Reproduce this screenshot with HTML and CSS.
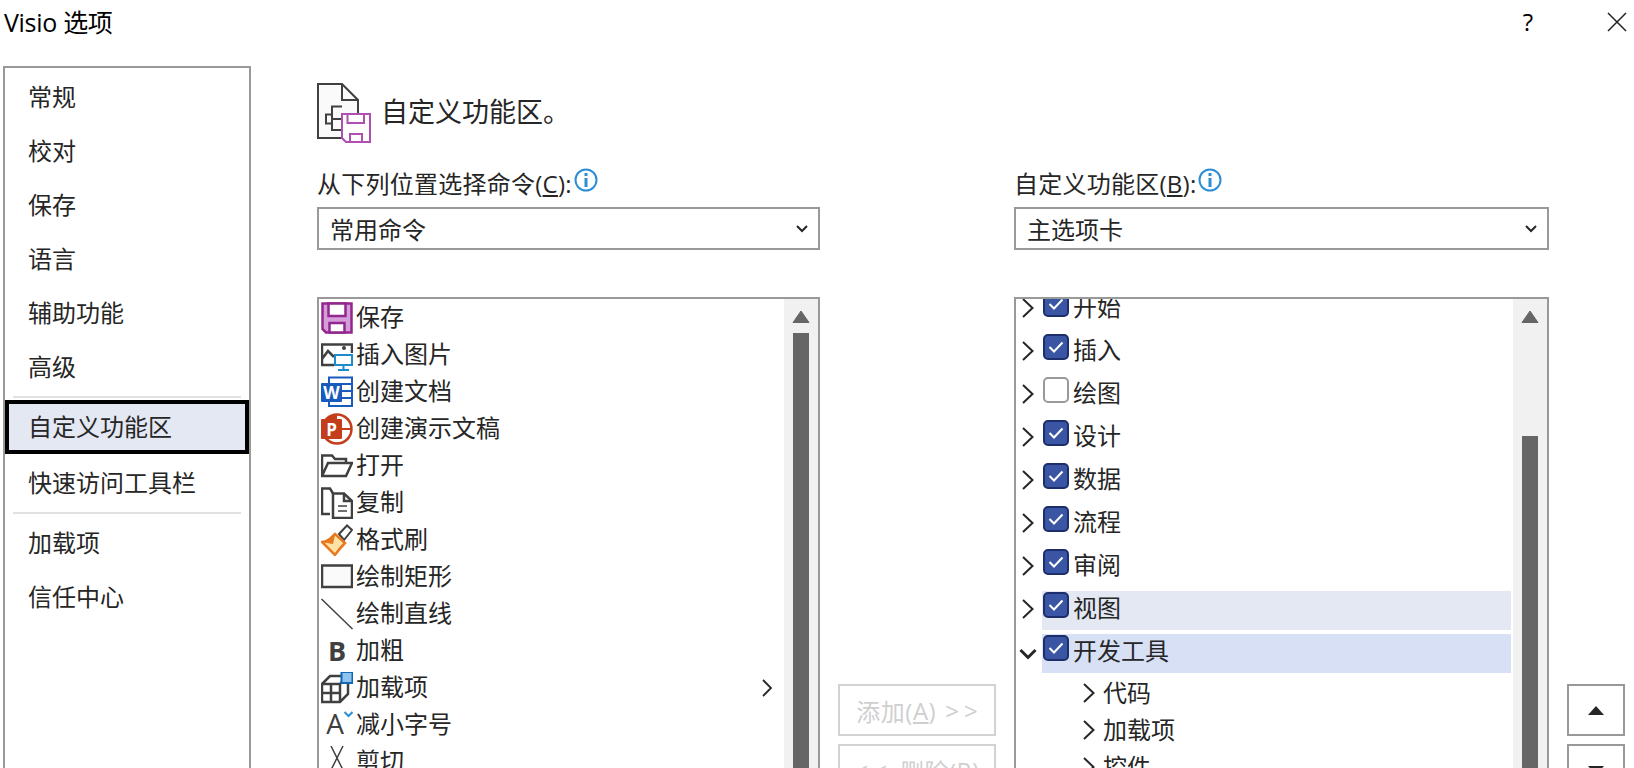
FILE: index.html
```html
<!DOCTYPE html>
<html lang="zh-CN">
<head>
<meta charset="utf-8">
<title>Visio 选项</title>
<link rel="stylesheet" href="styles.css">
</head>
<body>
<div class="dialog">
  <header class="titlebar">
    <div class="title">Visio 选项</div>
    <div class="help">?</div>
    <svg class="close" viewBox="0 0 20 20"><path d="M1 1L19 19M19 1L1 19"/></svg>
  </header>
  <div class="main">
    <nav class="nav">
      <div class="nav-item">常规</div>
      <div class="nav-item">校对</div>
      <div class="nav-item">保存</div>
      <div class="nav-item">语言</div>
      <div class="nav-item">辅助功能</div>
      <div class="nav-item">高级</div>
      <div class="nav-sep"></div>
      <div class="nav-item nav-selected">自定义功能区</div>
      <div class="nav-item nav-tall">快速访问工具栏</div>
      <div class="nav-sep"></div>
      <div class="nav-item">加载项</div>
      <div class="nav-item">信任中心</div>
    </nav>
    <section class="content">
      <div class="heading">
        <svg class="heading-icon" viewBox="0 0 56 62">
          <path class="dk2" fill="#fafafa" d="M1 56V2H25L41 18V56Z"/>
          <path class="dk2" fill="none" d="M25 2V18H41"/>
          <path class="dk2" fill="none" d="M9 32.500H15V41.500H9ZM15 32.500V24.500H25M15 37H25M15 41.500V48H25"/>
          <path fill="#fff" stroke="#ae4fb4" stroke-width="2" d="M25 32H53V60H29L25 56Z"/>
          <path fill="none" stroke="#ae4fb4" stroke-width="2" d="M30.500 32V41H47V32M33 60V52H45V60"/>
        </svg>
        <span>自定义功能区。</span>
      </div>
      <div class="columns">
        <div class="col col-left">
          <div class="label"><span>从下列位置选择命令(<u>C</u>):</span>
            <svg class="info" viewBox="0 0 24 24"><circle cx="12" cy="12" r="10.5"/><rect x="10.5" y="10" width="3" height="9"/><rect x="10.5" y="5" width="3" height="3"/></svg>
          </div>
          <div class="select"><span>常用命令</span>
            <svg class="sel-chev" viewBox="0 0 12 8"><path d="M1 1L6 6L11 1"/></svg>
          </div>
          <div class="list">
            <div class="rows">
              <div class="row"><svg class="ic" viewBox="0 0 32 32"><path fill="#d69ed9" stroke="#92278f" stroke-width="2.5" d="M1.5 1.5H30.5V30.5H5L1.5 27Z"/><path fill="#fff" stroke="#92278f" stroke-width="2.5" d="M7.5 1.5V14H24.5V1.5ZM8.5 30.5V21H23.5V30.5Z"/></svg><span>保存</span></div>
              <div class="row"><svg class="ic" viewBox="0 0 32 32"><path class="dk" fill="none" d="M13 26H1V5.500H31V14M1 20L7 12L13 18"/><circle cx="23" cy="9" r="2" fill="#404040"/><path fill="#fff" stroke="#1e8bcd" stroke-width="2" d="M14 16H31V26H14Z"/><path stroke="#1e8bcd" stroke-width="2" d="M22.500 26V31M17 31H28"/></svg><span>插入图片</span></div>
              <div class="row"><svg class="ic" viewBox="0 0 32 32"><path fill="#fff" stroke="#185abd" stroke-width="2" d="M8 1.500H31V30H8Z"/><path stroke="#185abd" stroke-width="2" d="M20 8H31M20 15H31M20 22H31"/><rect x="0" y="7" width="21" height="19" rx="1" fill="#185abd"/><text class="ic-w" x="10.500" y="22.500">W</text></svg><span>创建文档</span></div>
              <div class="row"><svg class="ic" viewBox="0 0 32 32"><circle cx="16" cy="16" r="14.500" fill="#fff" stroke="#c43e1c" stroke-width="2.500"/><path fill="#c43e1c" d="M16 1.500A14.500 14.500 0 0 0 4 24H16Z"/><path stroke="#c43e1c" stroke-width="2" d="M16 16H31"/><rect x="0" y="6" width="21" height="20" rx="1" fill="#c43e1c"/><text class="ic-p" x="10.500" y="22.500">P</text></svg><span>创建演示文稿</span></div>
              <div class="row"><svg class="ic" viewBox="0 0 32 32"><path class="dk" fill="none" d="M1 26V5.500H11L14 9H25V13M1 26H25L31 13H7L1 26Z"/></svg><span>打开</span></div>
              <div class="row"><svg class="ic" viewBox="0 0 32 32"><path class="dk" fill="none" d="M13 8L9 1.500H1V27H9"/><path class="dk" fill="#fff" d="M12 6.500H23L31 14V31H12Z"/><path class="dk" fill="none" d="M23 6.500V14H31"/><path stroke="#707070" stroke-width="2" d="M17 19H26M17 24H26"/></svg><span>复制</span></div>
              <div class="row"><svg class="ic" viewBox="0 0 32 32"><path fill="#fff" stroke="#404040" stroke-width="2" d="M18 10L26 1.500L31 6L23 16Z"/><path fill="#fbe3a8" stroke="#e8791e" stroke-width="2.500" d="M1 18C6 18 9 15 14 10L24 19C19 24 17 27 14 31Z"/><path fill="#e8791e" d="M3 18C6 18 9 15 14 11L12 20L6 19Z"/></svg><span>格式刷</span></div>
              <div class="row"><svg class="ic" viewBox="0 0 32 32"><rect class="dk" x="1" y="4.500" width="30" height="21.500" fill="#fafafa"/></svg><span>绘制矩形</span></div>
              <div class="row"><svg class="ic" viewBox="0 0 32 32"><path stroke="#404040" stroke-width="1.500" d="M0.500 1L31.500 31"/></svg><span>绘制直线</span></div>
              <div class="row"><span class="ic ic-b">B</span><span>加粗</span></div>
              <div class="row"><svg class="ic" viewBox="0 0 32 32"><path class="dk" fill="none" d="M1 12L9 4H27V22L19 30H1ZM1 12H19V30M19 12L27 4M10 12V30M1 21H19"/><rect x="20.500" y="0" width="11" height="11" fill="#8ec3ee" stroke="#1168b8" stroke-width="2"/></svg><span>加载项</span><svg class="more" viewBox="0 0 12 18"><path d="M2 1L10 9L2 17"/></svg></div>
              <div class="row"><svg class="ic" viewBox="0 0 32 32"><text class="ic-a" x="14" y="25">A</text><path fill="none" stroke="#2d8fd5" stroke-width="2" d="M23.500 3L27.500 7L31.500 3"/></svg><span>减小字号</span></div>
              <div class="row"><svg class="ic" viewBox="0 0 32 32"><path fill="none" stroke="#404040" stroke-width="1.500" d="M10 0L22 24M22 0L10 24M10 24A3 3 0 1 0 10 30M22 24A3 3 0 1 1 22 30"/></svg><span>剪切</span></div>
            </div>
            <div class="scrollbar">
              <svg class="sb-arrow" viewBox="0 0 18 14"><path d="M9 1L17 12.500H1Z"/></svg>
              <div class="thumb thumb-left"></div>
            </div>
          </div>
        </div>
        <div class="col col-mid">
          <div class="btn btn-off">添加(<u>A</u>)<span class="gt">&gt;&gt;</span></div>
          <div class="btn btn-off"><span class="lt">&lt;&lt;</span>删除(<u>R</u>)</div>
        </div>
        <div class="col col-right">
          <div class="label"><span>自定义功能区(<u>B</u>):</span>
            <svg class="info" viewBox="0 0 24 24"><circle cx="12" cy="12" r="10.5"/><rect x="10.5" y="10" width="3" height="9"/><rect x="10.5" y="5" width="3" height="3"/></svg>
          </div>
          <div class="select"><span>主选项卡</span>
            <svg class="sel-chev" viewBox="0 0 12 8"><path d="M1 1L6 6L11 1"/></svg>
          </div>
          <div class="list">
            <div class="tree">
              <div class="tree-row"><svg class="chev" viewBox="0 0 12 20"><path d="M1 1L10.500 10L1 19"/></svg><div class="tree-body"><svg class="cb" viewBox="0 0 26 26"><rect class="cb-on" x="1" y="1" width="24" height="24" rx="4"/><path class="cb-check" d="M6.500 13L11 17.500L19.500 8.500"/></svg><span>开始</span></div></div>
              <div class="tree-row"><svg class="chev" viewBox="0 0 12 20"><path d="M1 1L10.500 10L1 19"/></svg><div class="tree-body"><svg class="cb" viewBox="0 0 26 26"><rect class="cb-on" x="1" y="1" width="24" height="24" rx="4"/><path class="cb-check" d="M6.500 13L11 17.500L19.500 8.500"/></svg><span>插入</span></div></div>
              <div class="tree-row"><svg class="chev" viewBox="0 0 12 20"><path d="M1 1L10.500 10L1 19"/></svg><div class="tree-body"><svg class="cb" viewBox="0 0 26 26"><rect class="cb-off" x="1" y="1" width="24" height="24" rx="4"/></svg><span>绘图</span></div></div>
              <div class="tree-row"><svg class="chev" viewBox="0 0 12 20"><path d="M1 1L10.500 10L1 19"/></svg><div class="tree-body"><svg class="cb" viewBox="0 0 26 26"><rect class="cb-on" x="1" y="1" width="24" height="24" rx="4"/><path class="cb-check" d="M6.500 13L11 17.500L19.500 8.500"/></svg><span>设计</span></div></div>
              <div class="tree-row"><svg class="chev" viewBox="0 0 12 20"><path d="M1 1L10.500 10L1 19"/></svg><div class="tree-body"><svg class="cb" viewBox="0 0 26 26"><rect class="cb-on" x="1" y="1" width="24" height="24" rx="4"/><path class="cb-check" d="M6.500 13L11 17.500L19.500 8.500"/></svg><span>数据</span></div></div>
              <div class="tree-row"><svg class="chev" viewBox="0 0 12 20"><path d="M1 1L10.500 10L1 19"/></svg><div class="tree-body"><svg class="cb" viewBox="0 0 26 26"><rect class="cb-on" x="1" y="1" width="24" height="24" rx="4"/><path class="cb-check" d="M6.500 13L11 17.500L19.500 8.500"/></svg><span>流程</span></div></div>
              <div class="tree-row"><svg class="chev" viewBox="0 0 12 20"><path d="M1 1L10.500 10L1 19"/></svg><div class="tree-body"><svg class="cb" viewBox="0 0 26 26"><rect class="cb-on" x="1" y="1" width="24" height="24" rx="4"/><path class="cb-check" d="M6.500 13L11 17.500L19.500 8.500"/></svg><span>审阅</span></div></div>
              <div class="tree-row"><svg class="chev" viewBox="0 0 12 20"><path d="M1 1L10.500 10L1 19"/></svg><div class="tree-body tree-hover"><svg class="cb" viewBox="0 0 26 26"><rect class="cb-on" x="1" y="1" width="24" height="24" rx="4"/><path class="cb-check" d="M6.500 13L11 17.500L19.500 8.500"/></svg><span>视图</span></div></div>
              <div class="tree-row tree-open"><svg class="chev-down" viewBox="0 0 18 12"><path d="M1.500 2L9 9.500L16.500 2"/></svg><div class="tree-body tree-current"><svg class="cb" viewBox="0 0 26 26"><rect class="cb-on" x="1" y="1" width="24" height="24" rx="4"/><path class="cb-check" d="M6.500 13L11 17.500L19.500 8.500"/></svg><span>开发工具</span></div></div>
              <div class="sub-row"><svg class="chev" viewBox="0 0 12 20"><path d="M1 1L10.500 10L1 19"/></svg><span>代码</span></div>
              <div class="sub-row"><svg class="chev" viewBox="0 0 12 20"><path d="M1 1L10.500 10L1 19"/></svg><span>加载项</span></div>
              <div class="sub-row"><svg class="chev" viewBox="0 0 12 20"><path d="M1 1L10.500 10L1 19"/></svg><span>控件</span></div>
            </div>
            <div class="scrollbar">
              <svg class="sb-arrow" viewBox="0 0 18 14"><path d="M9 1L17 12.500H1Z"/></svg>
              <div class="thumb thumb-right"></div>
            </div>
          </div>
        </div>
        <div class="col col-order">
          <div class="btn btn-order"><svg class="tri" viewBox="0 0 16 9"><path d="M8 0L16 9H0Z"/></svg></div>
          <div class="btn btn-order"><svg class="tri" viewBox="0 0 16 9"><path d="M0 0H16L8 9Z"/></svg></div>
        </div>
      </div>
    </section>
  </div>
</div>
</body>
</html>
```

FILE: styles.css
```css
html, body {
  margin: 0;
  padding: 0;
  background: #fff;
}
body {
  width: 1634px;
  height: 768px;
  overflow: hidden;
  font-family: "Open Sans", "Noto Sans CJK SC", sans-serif;
  font-size: 24px;
  color: #262626;
}
.dialog {
  width: 1634px;
  height: 768px;
  overflow: hidden;
}
.titlebar {
  display: flex;
  align-items: center;
  height: 66px;
  padding-bottom: 22px;
  box-sizing: border-box;
}
.title {
  margin-left: 4px;
  color: #000;
  font-size: 25px;
  letter-spacing: -0.3px;
  line-height: 44px;
}
.help {
  margin-left: auto;
  width: 24px;
  text-align: center;
  color: #000;
  line-height: 44px;
}
.close {
  width: 20px;
  height: 20px;
  margin: 0 7px 0 67px;
  fill: none;
  stroke: #222;
  stroke-width: 1.5;
}
.main {
  display: flex;
}
.nav {
  width: 248px;
  height: 760px;
  flex: none;
  margin-left: 3px;
  padding-top: 2px;
  box-sizing: border-box;
  border: 2px solid #999;
}
.nav-item {
  height: 54px;
  line-height: 45px;
  padding-left: 19px;
  border: 4px solid transparent;
  box-sizing: border-box;
}
.nav-tall {
  height: 56px;
  line-height: 50px;
}
.nav-selected {
  border-color: #000;
  background: #e3e8f3;
}
.nav-sep {
  height: 2px;
  margin: 2px 8px;
  background: #e1e1e1;
}
.content {
  margin-left: 66px;
  flex: none;
}
.heading {
  display: flex;
  align-items: flex-start;
  height: 102px;
  box-sizing: border-box;
  font-size: 27px;
  line-height: 34px;
}
.heading-icon {
  width: 56px;
  height: 62px;
  margin-top: 16px;
  flex: none;
}
.heading span {
  margin-left: 8px;
  margin-top: 29px;
}
.dk {
  stroke: #404040;
  stroke-width: 2.5;
}
.dk2 {
  stroke: #404040;
  stroke-width: 2;
}
.columns {
  display: flex;
  gap: 18px;
}
.col-left {
  width: 503px;
  flex: none;
}
.col-mid {
  width: 158px;
  flex: none;
  padding-top: 516px;
}
.col-right {
  width: 535px;
  flex: none;
}
.col-order {
  width: 58px;
  flex: none;
  padding-top: 516px;
}
.label {
  display: flex;
  height: 39px;
  line-height: 32px;
  letter-spacing: 0.25px;
}
.info {
  width: 24px;
  height: 24px;
  margin-left: 2px;
  flex: none;
}
.info circle {
  fill: none;
  stroke: #2b8ed6;
  stroke-width: 2;
}
.info rect {
  fill: #2b8ed6;
}
.select {
  display: flex;
  align-items: center;
  justify-content: space-between;
  height: 43px;
  padding: 0 10px 0 11px;
  border: 2px solid #999;
  box-sizing: border-box;
}
.sel-chev {
  width: 12px;
  height: 8px;
  fill: none;
  stroke: #262626;
  stroke-width: 2;
}
.list {
  display: flex;
  height: 520px;
  margin-top: 47px;
  border: 2px solid #999;
  box-sizing: border-box;
  overflow: hidden;
}
.rows {
  flex: 1;
  padding-left: 2px;
}
.row {
  display: flex;
  align-items: center;
  height: 37px;
  line-height: 35px;
}
.row > span:not(.ic) {
  margin-bottom: 2px;
}
.ic {
  width: 32px;
  height: 32px;
  flex: none;
  margin-right: 3px;
}
.ic-w, .ic-p {
  font-family: "Open Sans", sans-serif;
  font-size: 17px;
  font-weight: 700;
  fill: #fff;
  text-anchor: middle;
}
.ic-a {
  font-family: "Open Sans", sans-serif;
  font-size: 28px;
  fill: #404040;
  text-anchor: middle;
}
.ic-b {
  display: block;
  text-align: center;
  font-family: "Open Sans", sans-serif;
  font-weight: 700;
  font-size: 27px;
  line-height: 32px;
  color: #404040;
}
.more {
  width: 12px;
  height: 18px;
  margin-left: auto;
  margin-right: 11px;
  fill: none;
  stroke: #262626;
  stroke-width: 1.8;
}
.scrollbar {
  width: 34px;
  flex: none;
  background: #f1f1f1;
  display: flex;
  flex-direction: column;
  align-items: center;
}
.sb-arrow {
  width: 18px;
  height: 14px;
  margin-top: 11px;
  flex: none;
  fill: #666;
  stroke: #666;
  stroke-linejoin: round;
}
.thumb {
  width: 16px;
  flex: none;
  background: #666;
}
.thumb-left {
  margin-top: 9px;
  height: 480px;
}
.thumb-right {
  margin-top: 112px;
  height: 380px;
}
.tree {
  flex: 1;
  margin-top: -9px;
}
.tree-row {
  display: flex;
  align-items: center;
  height: 39px;
  margin-bottom: 4px;
}
.tree-open {
  margin-bottom: 1px;
}
.chev {
  width: 12px;
  height: 20px;
  flex: none;
  margin-left: 7px;
  margin-right: 7px;
  fill: none;
  stroke: #262626;
  stroke-width: 2;
}
.tree-row .chev {
  margin-left: 6px;
  margin-right: 8px;
  margin-bottom: 3px;
}
.chev-down {
  width: 18px;
  height: 12px;
  flex: none;
  margin-left: 3px;
  margin-right: 5px;
  fill: none;
  stroke: #262626;
  stroke-width: 3;
}
.tree-body {
  display: flex;
  flex: 1;
  align-items: flex-start;
  height: 39px;
  line-height: 34px;
  margin-right: 2px;
}
.tree-hover {
  background: #e3e8f3;
}
.tree-current {
  background: #d8e0f6;
}
.cb {
  width: 26px;
  height: 26px;
  flex: none;
  margin: 1px 4px 0 1px;
}
.cb-on {
  fill: #3a55a4;
  stroke: #1c2f6b;
  stroke-width: 2;
}
.cb-off {
  fill: #fff;
  stroke: #999;
  stroke-width: 2;
}
.cb-check {
  fill: none;
  stroke: #fff;
  stroke-width: 2;
}
.sub-row {
  display: flex;
  align-items: center;
  height: 37px;
  line-height: 37px;
  padding-left: 60px;
}
.sub-row .chev {
  margin-right: 8px;
}
.btn {
  display: flex;
  align-items: center;
  justify-content: center;
  height: 52px;
  margin-bottom: 8px;
  box-sizing: border-box;
  border: 2px solid #999;
}
.btn-off {
  border-color: #d2d2d2;
  color: #cfcfcf;
  letter-spacing: 0.5px;
  white-space: pre;
}
.gt {
  margin-left: 9px;
  margin-right: -5px;
  letter-spacing: 5px;
}
.lt {
  margin-right: 8px;
  letter-spacing: 5px;
}
.tri {
  width: 16px;
  height: 9px;
  fill: #262626;
}
```
